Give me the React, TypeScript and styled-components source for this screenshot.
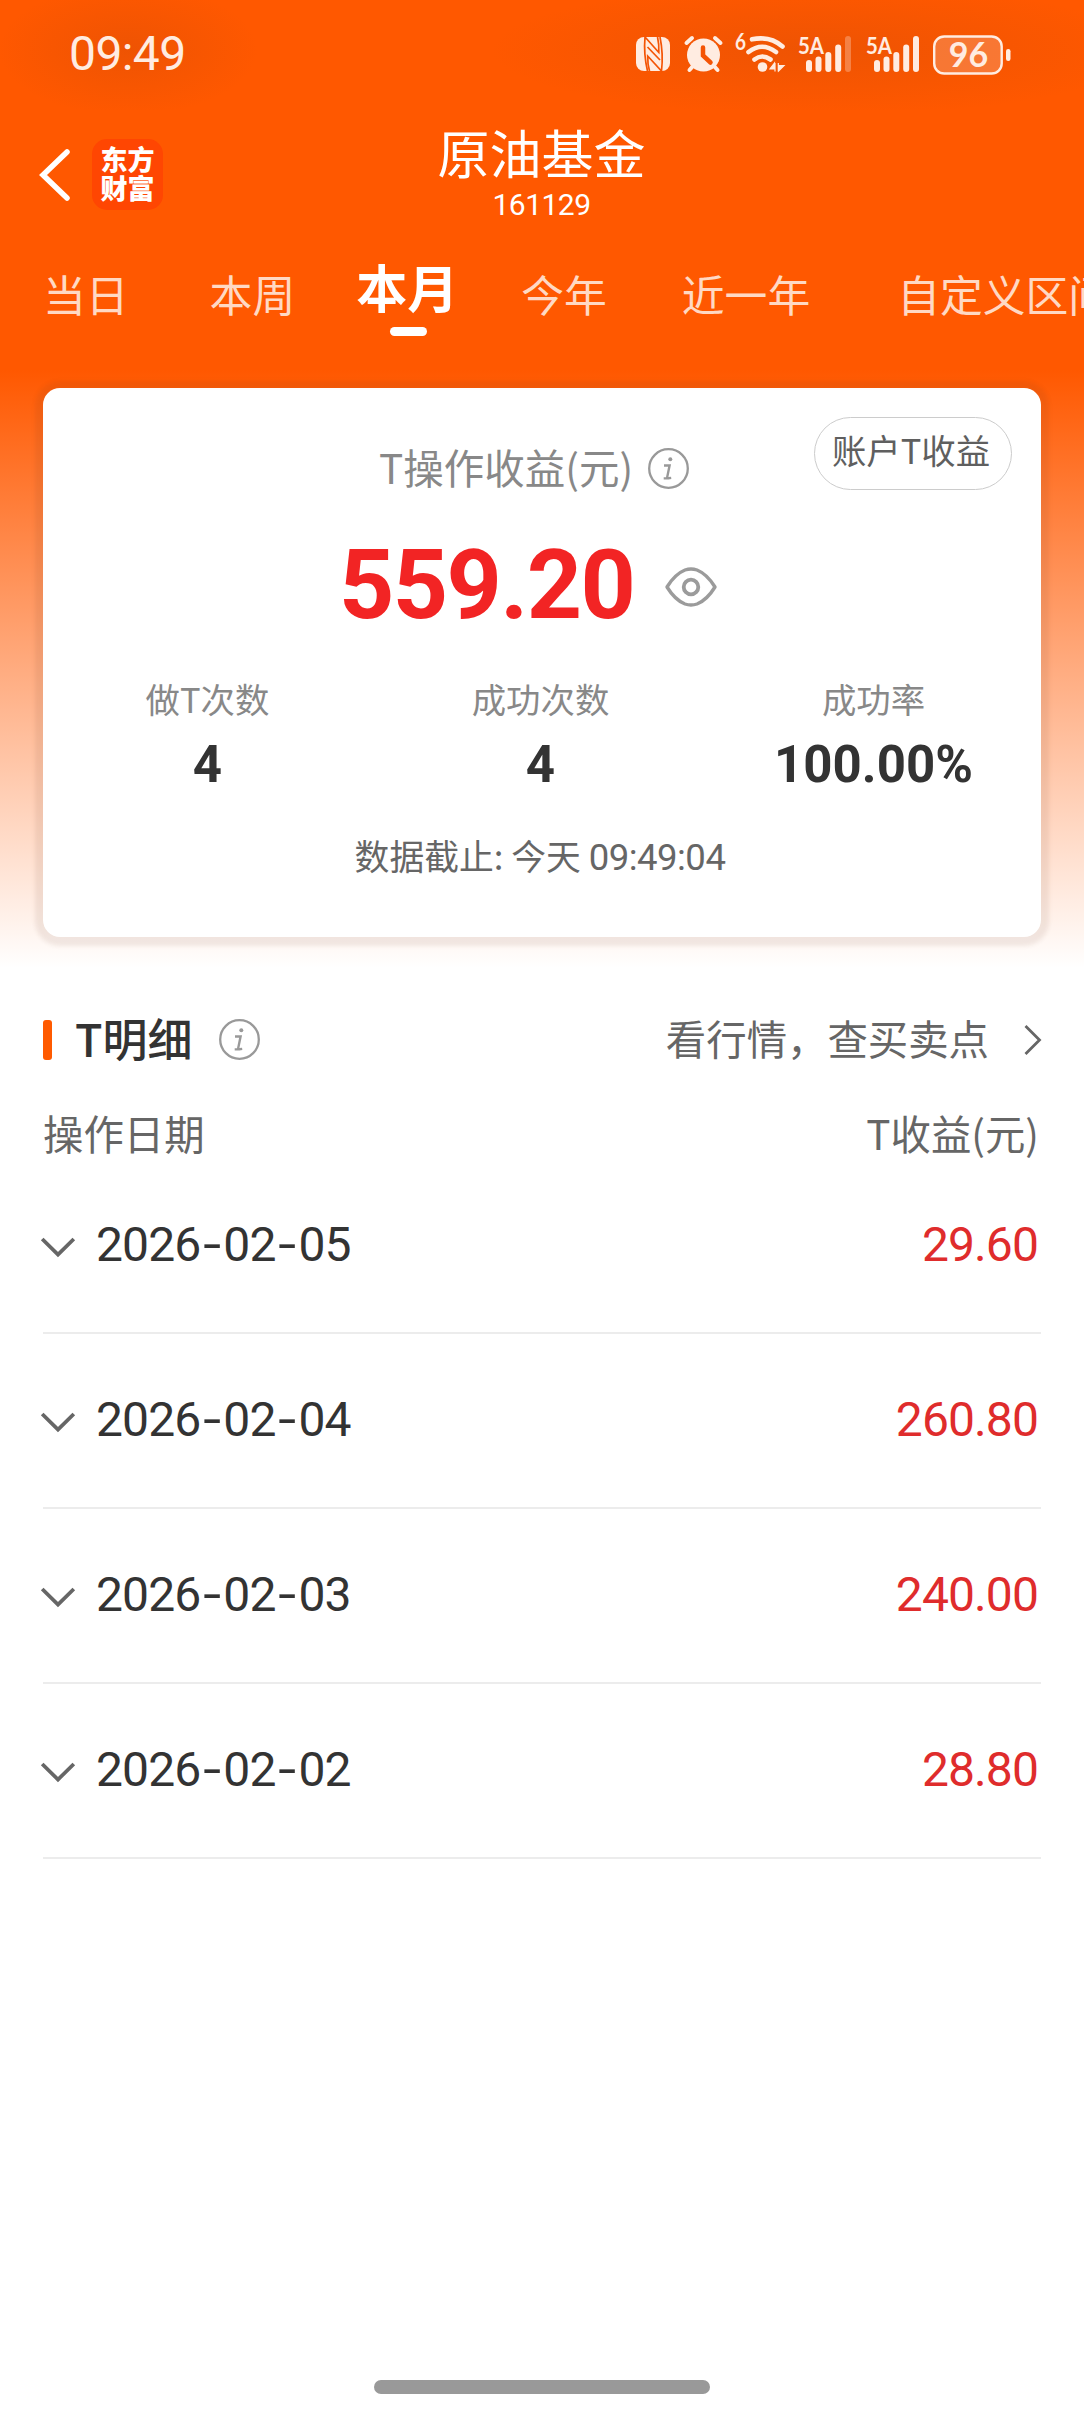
import React from "react";
import styled, { createGlobalStyle } from "styled-components";

const cjk = `"Noto Sans CJK SC", sans-serif`;
const figures = `Roboto, "Noto Sans CJK SC", sans-serif`;

const GlobalStyle = createGlobalStyle`
  * { box-sizing: border-box; }
  body { margin: 0; background: #fff; font-family: ${cjk}; }
  svg { display: block; flex: none; overflow: visible; }
`;

const Screen = styled.div`
  width: 1084px;
  height: 2412px;
  overflow: hidden;
  display: flex;
  flex-direction: column;
  background: linear-gradient(180deg, #ff5800 0, #ff5800 370px, #fff 968px);
`;

const StatusBar = styled.header`
  height: 110px;
  flex: none;
  display: flex;
  justify-content: space-between;
  align-items: flex-start;
  padding: 35px 72px 0 69px;
  background:
    radial-gradient(ellipse 130px 66px at 128px 50px, rgba(190, 70, 10, 0.26), transparent),
    radial-gradient(ellipse 330px 66px at 820px 50px, rgba(190, 70, 10, 0.26), transparent);
`;

const Clock = styled.time`
  padding-top: 1px;
  font: 400 48px/36px ${figures};
  letter-spacing: -0.6px;
  color: #ffece1;
`;

const StatusIcons = styled.div`
  display: flex;
  color: #ffece1;
`;

const NavBar = styled.nav`
  height: 140px;
  flex: none;
  display: grid;
  grid-template-columns: 1fr auto 1fr;
  padding: 0 39px 0 38px;
`;

const NavLeft = styled.div`
  display: flex;
  gap: 21px;
  padding-top: 29px;
`;

const BackIcon = styled.svg`
  margin-top: 9px;
`;

const Brand = styled.div`
  width: 71px;
  height: 71px;
  border-radius: 15px;
  background: #ff4602;
  color: #fff;
  font: 900 27px/29px ${cjk};
  padding-top: 5px;
  text-align: center;
`;

const NavTitle = styled.div`
  display: flex;
  flex-direction: column;
  align-items: center;
  padding-top: 12px;
  color: #fff;
`;

const FundName = styled.h1`
  margin: 0;
  font: 400 52px/60px ${cjk};
`;

const FundCode = styled.span`
  font: 400 30px/30px ${figures};
  letter-spacing: -0.5px;
  margin-top: 8px;
`;

const Tabs = styled.div`
  height: 138px;
  flex: none;
  display: flex;
  align-items: flex-start;
  padding-left: 43px;
  overflow: hidden;
`;

const Tab = styled.div<{ $gap: number; $active?: boolean }>`
  flex: none;
  margin-left: ${(p) => p.$gap}px;
  padding-top: ${(p) => (p.$active ? 6 : 13)}px;
  display: flex;
  flex-direction: column;
  align-items: center;
  white-space: nowrap;
  color: ${(p) => (p.$active ? "#fff" : "#ffd9c4")};
  font: ${(p) => (p.$active ? "700 51px" : "400 42.8px")} / 60px ${cjk};
`;

const TabMark = styled.i`
  width: 37px;
  height: 9px;
  border-radius: 5px;
  background: #fff;
  margin: 11px 0 0 3px;
`;

const Card = styled.section`
  flex: none;
  margin: 0 43px;
  height: 549px;
  padding-top: 29px;
  border-radius: 17px;
  background: #fff;
  box-shadow: 0 1px 4px 8px rgba(100, 55, 30, 0.09);
`;

const CardTop = styled.div`
  display: grid;
  grid-template-columns: 336px 1fr auto;
  padding-right: 29px;
  height: 74px;
`;

const CardTitle = styled.div`
  grid-column: 2;
  display: flex;
  gap: 15px;
  padding-top: 28px;
  color: #888;
  font: 400 40.5px/44px ${cjk};
`;

const InfoSvg = styled.svg`
  margin-top: 3px;
`;

const AccountButton = styled.button`
  width: 198px;
  height: 73px;
  padding: 0 4px 10px 0;
  border: 1px solid #ccc;
  border-radius: 37px;
  background: #fff;
  color: #5f5f5f;
  font: 400 34.4px/40px ${cjk};
`;

const AmountRow = styled.div`
  display: flex;
  align-items: center;
  gap: 33px;
  height: 100px;
  margin-top: 42px;
  padding-left: 296px;
`;

const Amount = styled.strong`
  width: 293px;
  margin-top: 4px;
  font: 700 96.5px/100px ${figures};
  letter-spacing: -1.6px;
  color: #f22424;
`;

const EyeSvg = styled.svg`
  margin-top: 7px;
`;

const Stats = styled.div`
  display: grid;
  grid-template-columns: repeat(3, 333px);
  margin: 42px 0 0 -2px;
`;

const Stat = styled.div`
  display: flex;
  flex-direction: column;
  align-items: center;
`;

const StatLabel = styled.span`
  font: 400 34.4px/46px ${cjk};
  color: #888;
`;

const StatValue = styled.strong`
  font: 700 51px/60px ${figures};
  margin-top: 14px;
  color: #333;
`;

const Deadline = styled.div`
  margin-top: 37px;
  padding-right: 4px;
  text-align: center;
  font: 400 34.8px/46px ${cjk};
  color: #666;
`;

const DeadlineTime = styled.span`
  font: 400 36.5px/46px ${figures};
  letter-spacing: -0.5px;
`;

const Detail = styled.section`
  flex: none;
  margin: 75px 43px 0;
`;

const DetailHead = styled.div`
  display: flex;
  align-items: center;
  height: 56px;
`;

const Accent = styled.i`
  width: 9px;
  height: 40px;
  border-radius: 3px;
  background: #ff5a00;
`;

const DetailTitle = styled.h2`
  margin: -5px 26px 0 23px;
  font: 500 45px/56px ${cjk};
  color: #333;
`;

const DetailInfo = styled.span`
  margin-top: -4px;
`;

const QuoteLink = styled.a`
  margin: 0 -1px 0 auto;
  display: flex;
  align-items: center;
  gap: 35px;
  color: #666;
`;

const QuoteText = styled.span`
  margin-top: -4px;
  font: 400 40.4px/56px ${cjk};
`;

const Columns = styled.div`
  display: flex;
  justify-content: space-between;
  margin-top: 35px;
  padding-right: 2px;
  font: 400 40.4px/60px ${cjk};
  color: #666;
`;

const Rows = styled.div`
  margin-top: -4px;
`;

const Row = styled.div`
  display: flex;
  align-items: center;
  height: 175px;
  padding: 0 3px 2px 0;
  border-bottom: 2px solid #ececec;
  font: 400 48px/60px ${figures};
  letter-spacing: -0.9px;
`;

const RowDate = styled.span`
  margin-left: 19px;
  color: #333;
`;

const Dash = styled.span`
  display: inline-block;
  width: 23px;
  line-height: 40px;
  text-align: center;
  font-family: Lato, sans-serif;
  transform: scaleX(1.3);
`;

const RowValue = styled.span`
  margin-left: auto;
  color: #df2c2c;
`;

const HomeBar = styled.div`
  flex: none;
  width: 336px;
  height: 14px;
  border-radius: 7px;
  background: #999;
  margin: auto auto 18px;
`;

const InfoIcon = () => (
  <InfoSvg width="41" height="41" viewBox="0 0 41 41" fill="none" stroke="#999">
    <circle cx="20.5" cy="20.5" r="19.3" strokeWidth="2.3" />
    <circle cx="22.3" cy="11.3" r="2" fill="#999" stroke="none" />
    <path d="M16 17.5h5.6l-2.4 11.6q-.2 1.4 1.2 1.2l2.8-.4M15.7 30.4h4.5" strokeWidth="2.4" />
  </InfoSvg>
);

const Signal = ({ weak }: { weak?: boolean }) => (
  <svg width="54" height="42" viewBox="0 0 54 42">
    <text x="0" y="18.5" fontFamily="Lato, sans-serif" fontWeight="700" fontSize="23" textLength="26" lengthAdjust="spacingAndGlyphs" fill="currentColor">5A</text>
    <g fill="currentColor">
      <rect x="8" y="25" width="6" height="12" rx="3" />
      <rect x="17.5" y="21.5" width="6" height="15.5" rx="3" />
      <rect x="27.3" y="17" width="6" height="20" rx="3" />
      <rect x="37.2" y="9.5" width="6" height="27.5" rx="3" />
      <rect x="47" y="1" width="6" height="36" rx="3" opacity={weak ? 0.3 : 1} />
    </g>
  </svg>
);

const StatusGlyphs = () => (
  <StatusIcons>
    <svg width="48" height="42" viewBox="0 0 48 42">
      <rect x="0" y="2" width="34" height="34" rx="8" fill="currentColor" />
      <g fill="none" stroke="#f45405" strokeWidth="1.7">
        <path d="M11.5 36Q7.500 19 9 2L22.800 17.500Q23.200 9 21.500 2" />
        <path d="M24 2Q27.500 19 25.500 36L11.700 21Q11.500 29 13.500 36" />
        <path d="M11.500 12L24 25" />
      </g>
    </svg>
    <svg width="51" height="42" viewBox="0 0 51 42" fill="none" stroke="currentColor" strokeLinecap="round">
      <circle cx="19.500" cy="20" r="16.500" fill="currentColor" stroke="none" />
      <path d="M2.500 8L8 3M36.500 8L31 3M9 31L5.500 35M30 31L33.500 35" strokeWidth="4" />
      <path d="M19 12.500V20.500L26.500 27.500" stroke="#f45405" strokeWidth="4.500" />
    </svg>
    <svg width="63" height="42" viewBox="0 0 63 42" fill="none" stroke="currentColor" strokeLinecap="round">
      <text x="0" y="14.500" fontFamily="Lato, sans-serif" fontWeight="700" fontSize="23" textLength="11" lengthAdjust="spacingAndGlyphs" fill="currentColor" stroke="none">6</text>
      <path d="M17 4.300Q35 .5 47.500 11.500M13.500 17Q27 6.500 41 17M19.500 24.500Q27 18.500 35.500 24.500" strokeWidth="4.600" />
      <circle cx="27.500" cy="32" r="4.800" fill="currentColor" stroke="none" />
      <path d="M35 34H39.500V28L35 34ZM43.500 36V30.500H49L43.500 36ZM40 28V36.500M43.300 28V36.500" fill="currentColor" strokeWidth="1.200" strokeLinecap="butt" />
    </svg>
    <Signal weak />
    <svg width="14" height="42" />
    <Signal />
    <svg width="13" height="42" />
    <svg width="79" height="42" viewBox="0 0 79 42">
      <rect x="1.200" y="1.500" width="67.500" height="37" rx="10" fill="#fff" fillOpacity=".2" stroke="currentColor" strokeWidth="2.400" />
      <rect x="73" y="14" width="4.500" height="12" rx="2.200" fill="currentColor" />
      <text x="35.500" y="32" textAnchor="middle" fontFamily="Lato, sans-serif" fontWeight="700" fontSize="34" fill="currentColor">96</text>
    </svg>
  </StatusIcons>
);

const Eye = () => (
  <EyeSvg width="52" height="42" viewBox="0 0 52 42" fill="none" stroke="#9b9b9b">
    <path d="M2 21Q10 8 20 4Q26 2 32 4Q42 8 50 21Q42 34 32 38Q26 40 20 38Q10 34 2 21Z" strokeWidth="3.400" strokeLinejoin="round" />
    <circle cx="26" cy="21" r="7.300" strokeWidth="3.800" />
  </EyeSvg>
);

const Chevron = () => (
  <svg width="34" height="18" viewBox="0 0 34 18" fill="none">
    <path d="M-.8 3L15 18.500L30.800 3" stroke="#666" strokeWidth="3.800" />
  </svg>
);

const tabs = [
  { label: "当日", gap: 0 },
  { label: "本周", gap: 81 },
  { label: "本月", gap: 61, active: true },
  { label: "今年", gap: 63 },
  { label: "近一年", gap: 75 },
  { label: "自定义区间", gap: 87 },
];

const stats = [
  { label: "做T次数", value: "4" },
  { label: "成功次数", value: "4" },
  { label: "成功率", value: "100.00%" },
];

const records = [
  { date: "2026-02-05", profit: "29.60" },
  { date: "2026-02-04", profit: "260.80" },
  { date: "2026-02-03", profit: "240.00" },
  { date: "2026-02-02", profit: "28.80" },
];

const DateText = ({ value }: { value: string }) => (
  <RowDate>
    {value.split("-").map((part, i) => (
      <React.Fragment key={i}>
        {i > 0 && <Dash>-</Dash>}
        {part}
      </React.Fragment>
    ))}
  </RowDate>
);

export default function App() {
  return (
    <Screen>
      <GlobalStyle />
      <StatusBar>
        <Clock>09:49</Clock>
        <StatusGlyphs />
      </StatusBar>
      <NavBar>
        <NavLeft>
          <BackIcon width="33" height="54" viewBox="0 0 33 54" fill="none">
            <path d="M29 4L5 27L29 50" stroke="#fff" strokeWidth="5.500" strokeLinecap="round" />
          </BackIcon>
          <Brand>东方<br />财富</Brand>
        </NavLeft>
        <NavTitle>
          <FundName>原油基金</FundName>
          <FundCode>161129</FundCode>
        </NavTitle>
      </NavBar>
      <Tabs>
        {tabs.map((t) => (
          <Tab key={t.label} $gap={t.gap} $active={t.active}>
            {t.label}
            {t.active && <TabMark />}
          </Tab>
        ))}
      </Tabs>
      <Card>
        <CardTop>
          <CardTitle>T操作收益(元)<InfoIcon /></CardTitle>
          <AccountButton>账户T收益</AccountButton>
        </CardTop>
        <AmountRow>
          <Amount>559.20</Amount>
          <Eye />
        </AmountRow>
        <Stats>
          {stats.map((s) => (
            <Stat key={s.label}>
              <StatLabel>{s.label}</StatLabel>
              <StatValue>{s.value}</StatValue>
            </Stat>
          ))}
        </Stats>
        <Deadline>数据截止: 今天 <DeadlineTime>09:49:04</DeadlineTime></Deadline>
      </Card>
      <Detail>
        <DetailHead>
          <Accent />
          <DetailTitle>T明细</DetailTitle>
          <DetailInfo><InfoIcon /></DetailInfo>
          <QuoteLink>
            <QuoteText>看行情，查买卖点</QuoteText>
            <svg width="18" height="32" viewBox="0 0 18 32" fill="none">
              <path d="M1.500 2L15.500 16L1.500 30" stroke="#666" strokeWidth="2.800" />
            </svg>
          </QuoteLink>
        </DetailHead>
        <Columns>
          <span>操作日期</span>
          <span>T收益(元)</span>
        </Columns>
        <Rows>
          {records.map((r) => (
            <Row key={r.date}>
              <Chevron />
              <DateText value={r.date} />
              <RowValue>{r.profit}</RowValue>
            </Row>
          ))}
        </Rows>
      </Detail>
      <HomeBar />
    </Screen>
  );
}
